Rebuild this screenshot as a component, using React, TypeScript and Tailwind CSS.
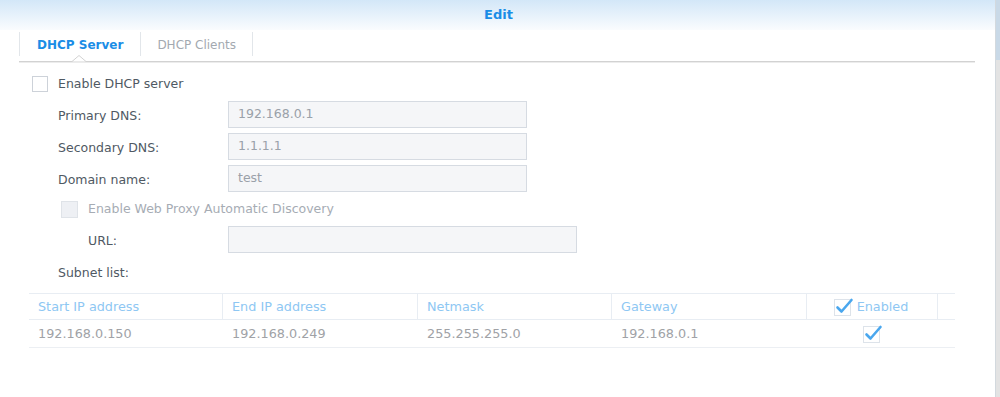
import React from "react";

const font = { fontFamily: '"DejaVu Sans", Verdana, sans-serif' };

function Check() {
  return (
    <svg width="20" height="20" viewBox="0 0 20 20" className="block">
      <rect x="0.5" y="2.5" width="16" height="16" fill="#fff" stroke="#dde3ea" />
      <path d="M3.5 10.5 L7.5 14.5 L17.5 3" fill="none" stroke="#4aa7ee" strokeWidth="2.6" strokeLinecap="round" strokeLinejoin="round" />
    </svg>
  );
}

function Field({ label, value, width = "w-[299px]", labelW = "w-[170px]" }: { label: string; value: string; width?: string; labelW?: string }) {
  return (
    <div className="flex items-center h-[27px]">
      <div className={`${labelW} text-[12.5px] text-[#4f5963] pt-[3px]`}>{label}</div>
      <div className={`${width} h-[27px] border border-[#d6dbe2] bg-[#f5f6f8] flex items-center pl-[9px] text-[12.5px] text-[#9aa1a9]`}>
        {value}
      </div>
    </div>
  );
}

export default function App() {
  const cols = ["Start IP address", "End IP address", "Netmask", "Gateway"];
  const vals = ["192.168.0.150", "192.168.0.249", "255.255.255.0", "192.168.0.1"];
  return (
    <div className="w-[1000px] h-[397px] flex bg-white overflow-hidden" style={font}>
      <div className="w-[995px] h-full flex flex-col">
        <div className="h-[30px] bg-gradient-to-b from-[#d3e7f8] to-[#fafcfe] flex items-center justify-center">
          <span className="text-[13px] font-bold text-[#1a8de6] pl-[2px]">Edit</span>
        </div>
        {/* tabs */}
        <div className="ml-[19px] w-[956px] relative">
          <div className="flex h-[31px] pt-[2px]">
            <div className="h-[24px] border-l border-r border-[#e2e6ea] px-[17px] flex items-center text-[12px] font-bold text-[#1a8de6] pt-[2px]">
              DHCP Server
            </div>
            <div className="h-[24px] border-r border-[#e2e6ea] px-[16px] flex items-center text-[12px] text-[#a3a9b0] pt-[2px]">
              DHCP Clients
            </div>
          </div>
          <div className="h-[1px] bg-[#d2d2d2]" />
          <div className="h-[1px] bg-[#ececec]" />
          <svg width="14" height="7" viewBox="0 0 14 7" className="absolute left-[53px] top-[25px]">
            <path d="M0 6.5 L7 0.5 L14 6.5" fill="#fff" stroke="#d2d2d2" strokeWidth="1" />
          </svg>
        </div>
        {/* form */}
        <div className="pl-[32px]">
          <div className="mt-[13px] flex items-center h-[16px]">
            <div className="w-[16px] h-[16px] border border-[#cdd2d9] bg-white" />
            <span className="ml-[10px] text-[12.5px] text-[#4f5963]">Enable DHCP server</span>
          </div>
          <div className="ml-[26px] mt-[9px] flex flex-col gap-[5px]">
            <Field label="Primary DNS:" value="192.168.0.1" />
            <Field label="Secondary DNS:" value="1.1.1.1" />
            <Field label="Domain name:" value="test" />
          </div>
          <div className="ml-[29px] mt-[9px] flex items-center h-[17px]">
            <div className="w-[17px] h-[17px] border border-[#dfe3e8] bg-[#eef0f4]" />
            <span className="ml-[10px] text-[12.5px] text-[#a6acb4]">Enable Web Proxy Automatic Discovery</span>
          </div>
          <div className="ml-[56px] mt-[8px]">
            <Field label="URL:" value="" width="w-[349px]" labelW="w-[140px]" />
          </div>
          <div className="ml-[26px] mt-[12px] h-[16px] flex items-center text-[12.5px] text-[#4f5963]">Subnet list:</div>
        </div>
        {/* table */}
        <div className="ml-[29px] mt-[12px] w-[926px]">
          <div className="grid grid-cols-[194px_195px_194px_195px_131px_17px] h-[27px] border-t border-b border-[#e8edf3]">
            {cols.map((c) => (
              <div key={c} className="border-r border-[#e8edf3] flex items-center pl-[9px] text-[12.8px] text-[#8ec7f3]">
                {c}
              </div>
            ))}
            <div className="border-r border-[#e8edf3] flex items-center justify-center gap-[3px] text-[12.8px] text-[#8ec7f3] pr-[2px]">
              <Check />
              <span>Enabled</span>
            </div>
            <div />
          </div>
          <div className="grid grid-cols-[194px_195px_194px_195px_131px_17px] h-[28px] border-b border-[#eceff3]">
            {vals.map((v) => (
              <div key={v} className="flex items-center pl-[9px] text-[12.8px] text-[#a0a2a6]">
                {v}
              </div>
            ))}
            <div className="flex items-center justify-center">
              <Check />
            </div>
            <div />
          </div>
        </div>
      </div>
      <div className="w-[5px] h-full border-l border-[#d3d9de] flex flex-col">
        <div className="h-[60px] bg-[#c9d9e7]" />
        <div className="flex-1 bg-[#e3e3e3]" />
      </div>
    </div>
  );
}
